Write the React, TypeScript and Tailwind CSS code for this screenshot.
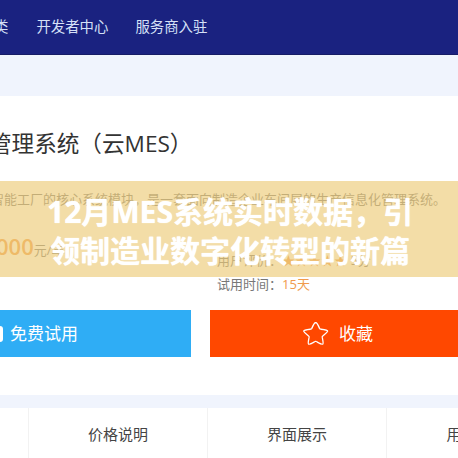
const cjk = "font-['Open_Sans','Noto_Sans_CJK_SC',sans-serif]";

function StarOutline() {
  return (
    <svg width="28" height="27" viewBox="0 0 30 28" fill="none" stroke="#ffffff" strokeWidth="1.4" strokeLinejoin="round">
      <path d="M15 2.5c1 0 1.6 1 3.800 6 .3.6.6.8 1.300.9 5.400.6 7.400.8 7.400 2 0 .9-1.300 2-5.300 5.400-.5.400-.6.800-.5 1.400 1 4.800 1.500 6.500.5 7.200-.9.600-2.500-.4-6.800-2.800-.5-.300-1-.300-1.500 0-4.300 2.400-5.900 3.400-6.800 2.800-1-.7-.5-2.400.5-7.200.1-.6 0-1-.5-1.400-4-3.400-5.300-4.500-5.300-5.400 0-1.200 2-1.400 7.400-2 .7-.1 1-.3 1.300-.9 2.200-5 2.800-6 3.800-6z" />
    </svg>
  );
}

export default function App() {
  return (
    <div className={`relative w-[458px] h-[458px] overflow-hidden bg-white ${cjk}`}>
      {/* Top nav */}
      <div className="h-[55px] bg-[#1a2280] border-b border-[#161c66] flex items-center text-[14.4px] text-[#d5e0f7] -ml-[6px]">
        <span>类</span>
        <span className="ml-[28px]">开发者中心</span>
        <span className="ml-[27px]">服务商入驻</span>
      </div>
      <div className="h-[41px] bg-[#f0f4fd]" />

      {/* Product info */}
      <div className="h-[299px] flex flex-col">
        <h1 className="mt-[33px] -ml-[11px] text-[22.6px] leading-[30px] font-normal text-[#333333] whitespace-nowrap">
          管理系统（云MES）
        </h1>
        <p className="mt-[31px] -ml-[9px] text-[13px] leading-[18px] text-[#777777] whitespace-nowrap">
          智能工厂的核心系统模块，是一套面向制造企业车间层的生产信息化管理系统。
        </p>
        <div className="flex mt-[18px] h-[84px]">
          <div className="w-[217px] -ml-[4px] mt-[5px] shrink-0 text-[#f09a4c] text-[22px] leading-[30px] font-semibold whitespace-nowrap">
            000<span className="text-[13px] font-normal text-[#777777]">元/年</span>
          </div>
          <div className="ml-[4px] text-[13px] leading-[20px] text-[#777777] whitespace-nowrap">
            <div className="mt-[24px]">
              用户评价：<span className="text-[#f09a4c]">★★★★★</span> 5分
            </div>
            <div className="mt-[4px]">
              试用时间：<span className="text-[#f09a4c]">15天</span>
            </div>
          </div>
        </div>
        <div className="flex h-[47px]">
          <div className="w-[191px] shrink-0 bg-[#2fadf5] flex items-center text-white text-[17px]">
            <span className="w-[3px] h-[16px] rounded-r-full bg-white mr-[7px]" />
            免费试用
          </div>
          <div className="ml-[19px] flex-1 pl-[7px] bg-[#ff4800] flex items-center justify-center gap-[9px] text-white text-[17px]">
            <StarOutline />
            收藏
          </div>
        </div>
      </div>
      <div className="h-[13px] bg-[#f0f4fd]" />

      {/* Tabs */}
      <div className="flex h-[50px] text-[15px] text-[#444444] -ml-[150px] w-[716px]">
        <div className="w-[179px] border-r border-[#f2f2f2]" />
        <div className="w-[179px] border-r border-[#f2f2f2] flex justify-center pt-[15px]">价格说明</div>
        <div className="w-[179px] border-r border-[#f2f2f2] flex justify-center pt-[15px]">界面展示</div>
        <div className="w-[179px] flex justify-center pt-[15px]">用户评价</div>
      </div>

      {/* Title band over the page */}
      <div className="absolute left-0 right-0 top-[181px] h-[96px] pt-[4px] pl-[2px] bg-[#eccb78]/65 flex flex-col items-center justify-center text-white text-[30px] leading-[39px] font-bold [text-shadow:0_0_1px_#ffffff]">
        <div className="whitespace-nowrap">12月MES系统实时数据，引</div>
        <div className="whitespace-nowrap">领制造业数字化转型的新篇</div>
      </div>
    </div>
  );
}
